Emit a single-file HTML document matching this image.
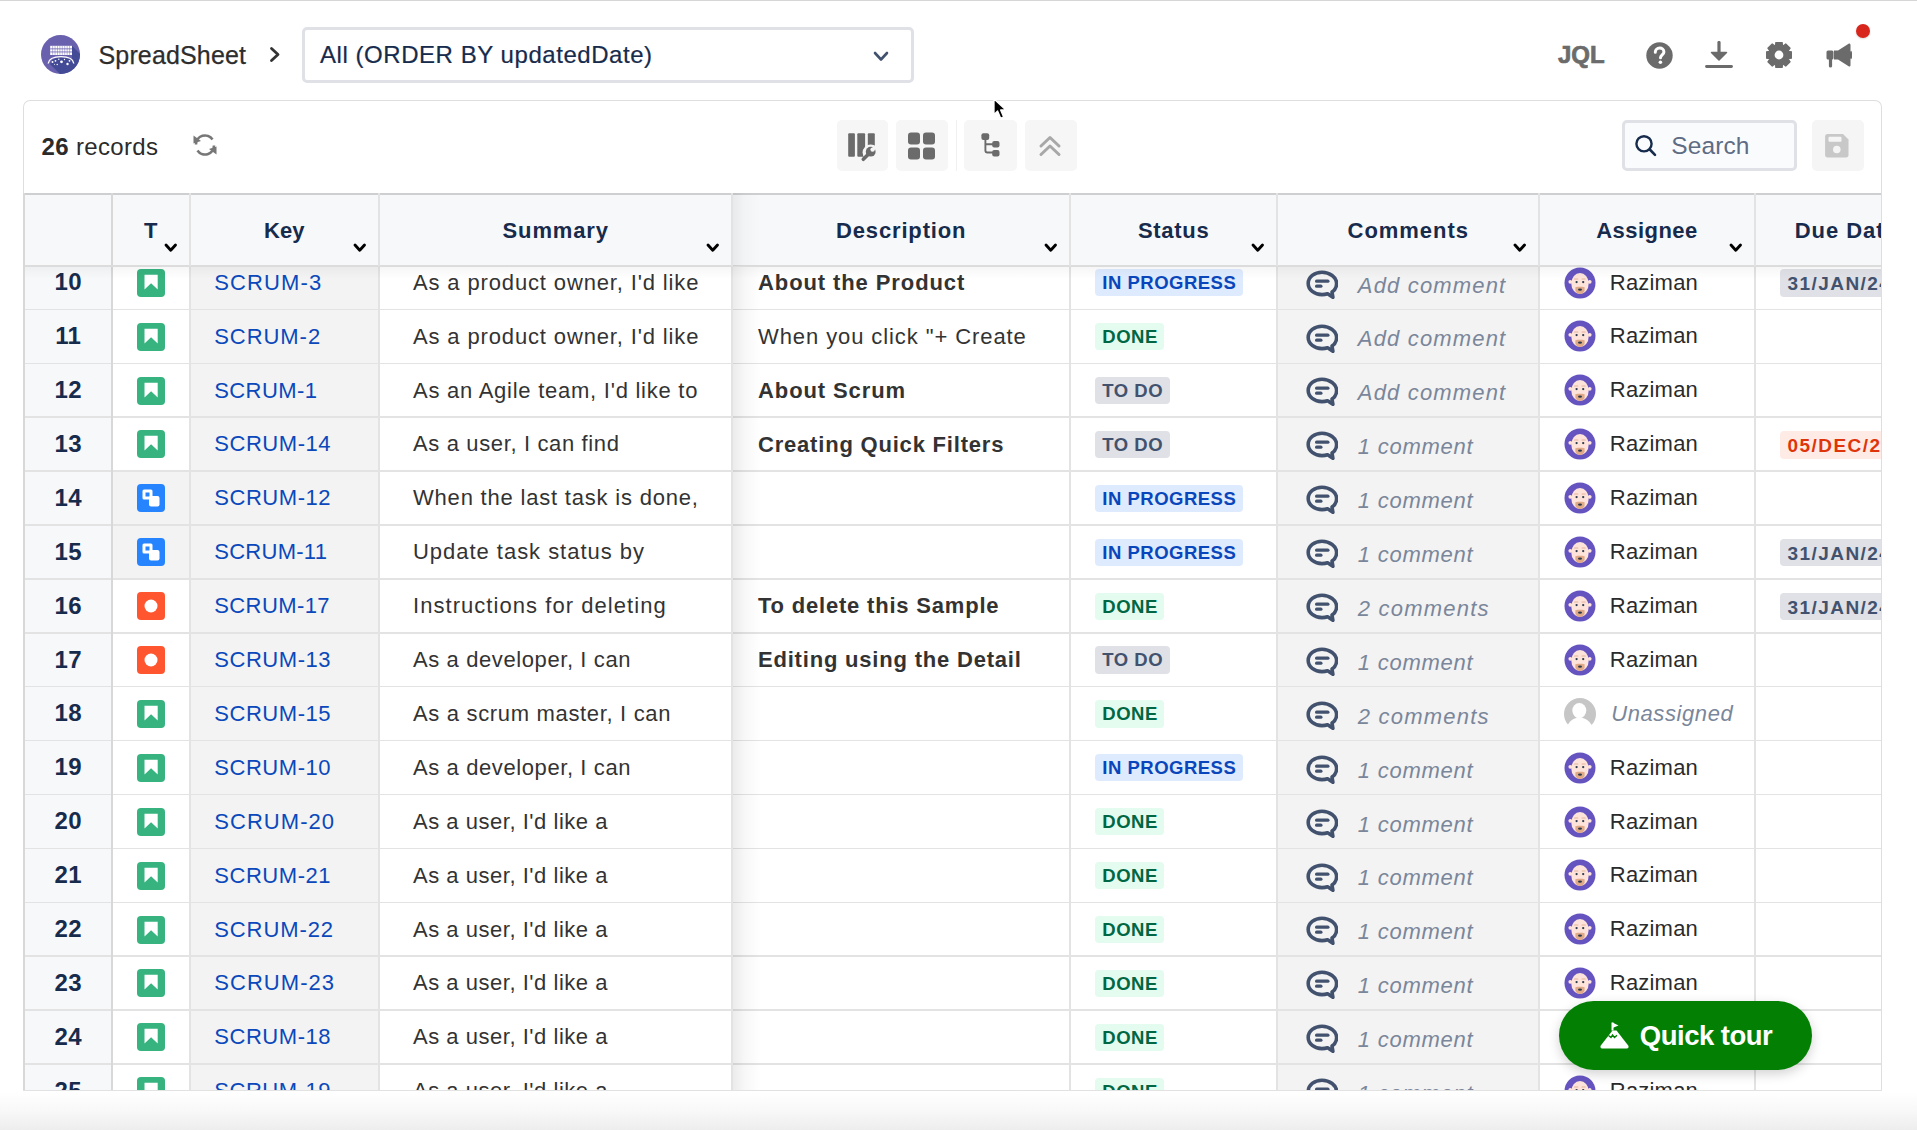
<!DOCTYPE html>
<html><head><meta charset="utf-8"><style>
*{box-sizing:border-box}
html,body{margin:0;padding:0;width:1917px;height:1130px;overflow:hidden;background:#fff;font-family:"Liberation Sans",sans-serif}
.t{position:absolute;white-space:nowrap}
.a{position:absolute}
</style></head><body>
<div class="a" style="left:0;top:0;width:1917px;height:1.3px;background:#d6d6d6"></div>
<svg class="a" style="left:41px;top:35px" width="39" height="39" viewBox="0 0 39 39">
<defs><clipPath id="lc"><circle cx="19.5" cy="19.5" r="19.5"/></clipPath></defs>
<circle cx="19.5" cy="19.5" r="19.5" fill="#6a61ae"/>
<g clip-path="url(#lc)"><path d="M31 10.8L60 40L40 60L9.2 29.2C9.8 24.8 14 22.3 20 22.3C25.5 22.3 29.5 23.6 31 25z" fill="#434b96"/></g>
<rect x="9.2" y="10.8" width="21.8" height="9.2" fill="#fff"/>
<path d="M9.2 13.85h21.8M9.2 16.95h21.8" stroke="#6a61ae" stroke-width="0.8"/><path d="M11.62 10.8v9M14.04 10.8v9M16.47 10.8v9M18.89 10.8v9M21.31 10.8v9M23.73 10.8v9M26.16 10.8v9M28.58 10.8v9" stroke="#6a61ae" stroke-width="0.45"/>
<path d="M7.2 28.5C7.8 24 13 21.6 20 21.6S32.2 24 32.8 28.5" fill="none" stroke="#fff" stroke-width="1.4"/>
<circle cx="11.5" cy="27" r="1" fill="#fff"/><circle cx="14.5" cy="25.8" r="0.9" fill="#fff"/><circle cx="17.8" cy="24.2" r="0.7" fill="#fff"/><circle cx="20.5" cy="26.8" r="1.4" fill="#fff"/><circle cx="23.5" cy="24.5" r="0.7" fill="#fff"/><circle cx="26.5" cy="29" r="1.2" fill="#fff"/><circle cx="16.2" cy="29.5" r="0.7" fill="#fff"/><circle cx="28.5" cy="25.8" r="0.9" fill="#fff"/><circle cx="13.5" cy="29.2" r="0.5" fill="#fff"/>
</svg>
<div class="t" style="left:98.5px;top:42.64px;font-size:25px;line-height:25px;color:#2d2d2d;font-weight:400;font-style:normal;letter-spacing:0.15px;-webkit-text-stroke:0.25px #2d2d2d;">SpreadSheet</div>
<svg class="a" style="left:268px;top:46px" width="14" height="17" viewBox="0 0 14 17"><path d="M3.5 2.5L10 8.5L3.5 14.5" fill="none" stroke="#333" stroke-width="2.8" stroke-linecap="round" stroke-linejoin="round"/></svg>
<div class="a" style="left:302px;top:27px;width:612px;height:56px;border:3px solid #dfe1e6;border-radius:5px;background:#fff"></div>
<div class="t" style="left:320px;top:43.28px;font-size:24px;line-height:24px;color:#172b4d;font-weight:400;font-style:normal;letter-spacing:0.55px;-webkit-text-stroke:0.2px #172b4d;">All (ORDER BY updatedDate)</div>
<svg style="position:absolute;left:872px;top:49.5px" width="18" height="12.5" viewBox="-2 -2 18 12.5"><path d="M1 1L7.0 7.5L13 1" fill="none" stroke="#42526e" stroke-width="2.6" stroke-linecap="round" stroke-linejoin="round"/></svg><div class="t" style="left:1558px;top:43.48px;font-size:24px;line-height:24px;color:#6b6b6b;font-weight:700;font-style:normal;letter-spacing:0px;-webkit-text-stroke:0.7px #6b6b6b;">JQL</div>
<svg class="a" style="left:1646px;top:42px" width="27" height="27" viewBox="0 0 27 27"><circle cx="13.5" cy="13.5" r="13.2" fill="#6b6b6b"/><path d="M9.3 10.3c0-2.5 1.9-4.2 4.3-4.2s4.3 1.6 4.3 3.8c0 2.9-3.4 3.1-3.4 5.9" fill="none" stroke="#fff" stroke-width="3" stroke-linecap="round"/><circle cx="14.4" cy="20.2" r="1.8" fill="#fff"/></svg>
<svg class="a" style="left:1705px;top:41px" width="28" height="28" viewBox="0 0 28 28"><path d="M14 1.5V15" stroke="#6b6b6b" stroke-width="3.2" stroke-linecap="round"/><path d="M6.5 11.5L14 19L21.5 11.5z" fill="#6b6b6b" stroke="#6b6b6b" stroke-width="1.5" stroke-linejoin="round"/><path d="M1.5 25.5h25" stroke="#6b6b6b" stroke-width="2.8" stroke-linecap="round"/></svg>
<svg class="a" style="left:1765.5px;top:41.5px" width="26" height="26" viewBox="0 0 26 26"><polygon points="25.63,9.91 25.63,16.09 21.88,16.65 21.86,16.70 24.11,19.74 19.74,24.11 16.70,21.86 16.65,21.88 16.09,25.63 9.91,25.63 9.35,21.88 9.30,21.86 6.26,24.11 1.89,19.74 4.14,16.70 4.12,16.65 0.37,16.09 0.37,9.91 4.12,9.35 4.14,9.30 1.89,6.26 6.26,1.89 9.30,4.14 9.35,4.12 9.91,0.37 16.09,0.37 16.65,4.12 16.70,4.14 19.74,1.89 24.11,6.26 21.86,9.30 21.88,9.35" fill="#6b6b6b" stroke="#6b6b6b" stroke-width="1.2" stroke-linejoin="round"/><circle cx="13" cy="13" r="4.4" fill="#fff"/></svg>
<svg class="a" style="left:1825px;top:42px" width="27" height="26" viewBox="0 0 27 26"><path d="M24 1.5c1 0 1.5.7 1.5 1.6v19.8c0 .9-.5 1.6-1.5 1.6L13 17.5H9V8.5h4z" fill="#6b6b6b"/><rect x="1.5" y="8.5" width="7" height="9" rx="1.5" fill="#6b6b6b"/><path d="M5.5 17.5v6.5" stroke="#6b6b6b" stroke-width="3.2" stroke-linecap="round"/><path d="M25.5 9.5c1 1 1 6 0 7" stroke="#6b6b6b" stroke-width="2"/></svg>
<div class="a" style="left:1855.7px;top:23.5px;width:14.6px;height:14.6px;border-radius:50%;background:#d8261c;box-shadow:0 1px 2px rgba(0,0,0,.15)"></div>
<div class="a" style="left:23px;top:100px;width:1859px;height:991px;border:1.5px solid #dedede;border-bottom:none;border-radius:7px 7px 0 0;background:#fff"></div>
<div class="t" style="left:41.5px;top:134.58px;font-size:24px;line-height:24px;color:#2b2b2b;font-weight:400;font-style:normal;letter-spacing:0.35px;"><b>26</b> records</div>
<svg class="a" style="left:192px;top:132px" width="26" height="26" viewBox="0 0 26 26"><path d="M4 12.5A9 9 0 0 1 20.5 7.5" fill="none" stroke="#777" stroke-width="2.6"/><path d="M22 13.5A9 9 0 0 1 5.5 18.5" fill="none" stroke="#777" stroke-width="2.6"/><path d="M1.5 3.5L1.5 11.5L9 9z" fill="#777"/><path d="M24.5 22.5L24.5 14.5L17 17z" fill="#777"/></svg>
<div class="a" style="left:837px;top:119.5px;width:51px;height:51.5px;border-radius:5px;background:#f6f6f6"></div>
<div class="a" style="left:896px;top:119.5px;width:52px;height:51.5px;border-radius:5px;background:#f6f6f6"></div>
<div class="a" style="left:964px;top:119.5px;width:53px;height:51.5px;border-radius:5px;background:#f6f6f6"></div>
<div class="a" style="left:1025px;top:119.5px;width:52px;height:51.5px;border-radius:5px;background:#f6f6f6"></div>
<div class="a" style="left:955.5px;top:119.5px;width:1.5px;height:51.5px;background:#f0f0f0"></div>
<svg class="a" style="left:842px;top:128px" width="40" height="36" viewBox="0 0 40 36"><rect x="6.2" y="5.3" width="6.7" height="23.5" rx="1" fill="#6b6b6b"/><rect x="15.3" y="5.3" width="7.8" height="23.5" rx="1" fill="#6b6b6b"/><rect x="25.8" y="5.3" width="7" height="23.5" rx="1" fill="#6b6b6b"/><circle cx="28.6" cy="24.6" r="8" fill="#f6f6f6"/><path d="M28.3 24.2L21.3 31.3" stroke="#6b6b6b" stroke-width="3.6" stroke-linecap="round"/><circle cx="28.7" cy="23.7" r="4.9" fill="#6b6b6b"/><circle cx="30.6" cy="21.6" r="2.2" fill="#f6f6f6"/><path d="M30.6 21.6L34 18.2" stroke="#f6f6f6" stroke-width="3"/></svg>
<svg class="a" style="left:907px;top:131.5px" width="29" height="28" viewBox="0 0 29 28"><rect x="1" y="0.5" width="12" height="12" rx="3" fill="#6b6b6b"/><rect x="16" y="0.5" width="12" height="12" rx="3" fill="#6b6b6b"/><rect x="1" y="15.5" width="12" height="12" rx="3" fill="#6b6b6b"/><rect x="16" y="15.5" width="12" height="12" rx="3" fill="#6b6b6b"/></svg>
<svg class="a" style="left:972px;top:128px" width="36" height="36" viewBox="0 0 36 36"><rect x="9.4" y="5.3" width="7.8" height="6.6" rx="2" fill="#6b6b6b"/><rect x="20.2" y="13" width="7.3" height="6.4" rx="2" fill="#6b6b6b"/><rect x="20.2" y="22" width="7.3" height="6.5" rx="2" fill="#6b6b6b"/><path d="M13.4 11v11.5q0 2 2 2H21M13.4 16.3H21" fill="none" stroke="#6b6b6b" stroke-width="1.9"/></svg>
<svg class="a" style="left:1038px;top:134px" width="24" height="23" viewBox="0 0 24 23"><path d="M3 12L12 3.5L21 12M3 20.5L12 12L21 20.5" fill="none" stroke="#a8a8a8" stroke-width="3" stroke-linecap="round" stroke-linejoin="round"/></svg>
<div class="a" style="left:1622px;top:119.5px;width:174.5px;height:51.5px;border:3px solid #dfe1e6;border-radius:5px;background:#fafbfc"></div>
<svg class="a" style="left:1634px;top:134px" width="24" height="23" viewBox="0 0 24 23"><circle cx="10" cy="9.8" r="7.6" fill="none" stroke="#172b4d" stroke-width="2.4"/><path d="M15.8 15.5L21 20.8" stroke="#172b4d" stroke-width="2.6" stroke-linecap="round"/></svg>
<div class="t" style="left:1671.3px;top:133.96px;font-size:24.5px;line-height:24.5px;color:#5e6c84;font-weight:400;font-style:normal;letter-spacing:0.1px;">Search</div>
<div class="a" style="left:1811.5px;top:119.5px;width:52.5px;height:51.5px;border-radius:5px;background:#f5f5f5"></div>
<svg class="a" style="left:1824px;top:133px" width="26" height="25" viewBox="0 0 26 25"><path d="M3.5 1h15.5l5.5 5.5v15.5c0 1.4-1 2.4-2.4 2.4H3.5c-1.4 0-2.4-1-2.4-2.4V3.4C1.1 2 2.1 1 3.5 1z" fill="#c8c8c8"/><rect x="4.5" y="3.8" width="13" height="5" rx="1" fill="#f5f5f5"/><circle cx="12.8" cy="16.5" r="3.8" fill="#f5f5f5"/></svg>
<div class="a" style="left:24.5px;top:193.2px;width:1856px;height:897.8px;overflow:hidden">
<div class="a" style="left:0;top:0;width:87.5px;height:897.8px;background:#f7f8fa"></div>
<div class="a" style="left:165.5px;top:0;width:189px;height:897.8px;background:#f3f3f3"></div>
<div class="a" style="left:1252.5px;top:0;width:262px;height:897.8px;background:#f3f3f3"></div>
<div class="a" style="left:87.5px;top:277.90px;width:78px;height:53.9px;background:#f3f3f3"></div>
<div class="a" style="left:87.5px;top:331.80px;width:78px;height:53.9px;background:#f3f3f3"></div>
<div class="a" style="left:0;top:115.45px;width:1856px;height:1.5px;background:#e3e3e3"></div>
<div class="a" style="left:0;top:169.35px;width:1856px;height:1.5px;background:#e3e3e3"></div>
<div class="a" style="left:0;top:223.25px;width:1856px;height:1.5px;background:#e3e3e3"></div>
<div class="a" style="left:0;top:277.15px;width:1856px;height:1.5px;background:#e3e3e3"></div>
<div class="a" style="left:0;top:331.05px;width:1856px;height:1.5px;background:#e3e3e3"></div>
<div class="a" style="left:0;top:384.95px;width:1856px;height:1.5px;background:#e3e3e3"></div>
<div class="a" style="left:0;top:438.85px;width:1856px;height:1.5px;background:#e3e3e3"></div>
<div class="a" style="left:0;top:492.75px;width:1856px;height:1.5px;background:#e3e3e3"></div>
<div class="a" style="left:0;top:546.65px;width:1856px;height:1.5px;background:#e3e3e3"></div>
<div class="a" style="left:0;top:600.55px;width:1856px;height:1.5px;background:#e3e3e3"></div>
<div class="a" style="left:0;top:654.45px;width:1856px;height:1.5px;background:#e3e3e3"></div>
<div class="a" style="left:0;top:708.35px;width:1856px;height:1.5px;background:#e3e3e3"></div>
<div class="a" style="left:0;top:762.25px;width:1856px;height:1.5px;background:#e3e3e3"></div>
<div class="a" style="left:0;top:816.15px;width:1856px;height:1.5px;background:#e3e3e3"></div>
<div class="a" style="left:0;top:870.05px;width:1856px;height:1.5px;background:#e3e3e3"></div>
<div class="a" style="left:0;top:923.95px;width:1856px;height:1.5px;background:#e3e3e3"></div>
<div class="a" style="left:86.50px;top:0;width:2px;height:897.8px;background:#d8d8d8"></div>
<div class="a" style="left:164.75px;top:0;width:1.5px;height:897.8px;background:#e3e3e3"></div>
<div class="a" style="left:353.75px;top:0;width:1.5px;height:897.8px;background:#e3e3e3"></div>
<div class="a" style="left:706.75px;top:0;width:1.5px;height:897.8px;background:#e3e3e3"></div>
<div class="a" style="left:1044.75px;top:0;width:1.5px;height:897.8px;background:#e3e3e3"></div>
<div class="a" style="left:1251.75px;top:0;width:1.5px;height:897.8px;background:#e3e3e3"></div>
<div class="a" style="left:1513.75px;top:0;width:1.5px;height:897.8px;background:#e3e3e3"></div>
<div class="a" style="left:1729.75px;top:0;width:1.5px;height:897.8px;background:#e3e3e3"></div>
<div class="a" style="left:708.5px;top:0;width:28px;height:897.8px;background:linear-gradient(90deg,rgba(0,0,0,.08),rgba(0,0,0,.03) 40%,rgba(0,0,0,0))"></div>
<div class="t" style="left:0;width:87.5px;text-align:center;top:77.08px;font-size:24px;line-height:24px;font-weight:700;color:#172b4d;padding-left:0px;letter-spacing:0.3px">10</div>
<div class="a" style="left:112.9px;top:75.60px;width:28px;height:28px"><svg width="28" height="28" viewBox="0 0 28 28"><rect x="0" y="0" width="28" height="28" rx="4" fill="#36b37e"/><path d="M7.5 5.8h13.2v14.8l-6.6-6.3-6.6 6.3z" fill="#fff"/></svg></div>
<div class="t" style="left:189.7px;top:78.58px;font-size:22px;line-height:22px;color:#0a48bb;font-weight:400;font-style:normal;letter-spacing:1.117px;">SCRUM-3</div>
<div class="t" style="left:388.5px;top:78.58px;font-size:22px;line-height:22px;color:#333;font-weight:400;font-style:normal;letter-spacing:0.8600000000000001px;">As a product owner, I&#39;d like</div>
<div class="t" style="left:733.5px;top:78.78px;font-size:22px;line-height:22px;color:#333;font-weight:700;font-style:normal;letter-spacing:0.9px;">About the Product</div>
<div class="a" style="left:1070.5px;top:76.00px;height:27.2px;padding:0 6.5px 0 7.3px;border-radius:4px;background:#deebff;font-size:18.5px;line-height:27.6px;font-weight:700;color:#0a46bb;letter-spacing:0.5px;white-space:nowrap">IN PROGRESS</div>
<div class="a" style="left:1281.0px;top:76.50px;width:32px;height:29px"><svg width="32" height="29" viewBox="0 0 32 29"><path d="M16 2.2C8.4 2.2 2.2 7.2 2.2 13.4S8.4 24.6 16 24.6c2 0 3.9-.3 5.6-.9l5.3 3.6-.9-5.3c2.9-2 4.6-5 4.6-8.6C30.6 7.2 23.6 2.2 16 2.2z" fill="none" stroke="#42526e" stroke-width="3.6" stroke-linejoin="round"/><rect x="9" y="9.6" width="14.5" height="3.2" rx="1.6" fill="#42526e"/><rect x="9" y="14.6" width="7.5" height="3.2" rx="1.6" fill="#42526e"/></svg></div>
<div class="t" style="left:1333.3px;top:81.38px;font-size:22px;line-height:22px;color:#7a869a;font-weight:400;font-style:italic;letter-spacing:1.17px;">Add comment</div>
<div class="a" style="left:1539.5px;top:73.40px;width:32px;height:32px"><svg width="32" height="32" viewBox="0 0 32 32"><circle cx="16" cy="16" r="15.5" fill="#6554c0"/><circle cx="6.3" cy="14.8" r="1.9" fill="#fde3da"/><circle cx="25.7" cy="14.8" r="1.9" fill="#fde3da"/><ellipse cx="16" cy="16.5" rx="8.7" ry="10.6" fill="#fde3da"/><path d="M11.4 20.3c1.5-.5 3-.6 4.6-.6s3.1.1 4.6.6v3.5c-.8 2.2-2.5 3.3-4.6 3.3s-3.8-1.1-4.6-3.3z" fill="#e0a988"/><ellipse cx="16" cy="22.6" rx="2" ry="1.2" fill="#2b3a4a"/><circle cx="12.6" cy="15.1" r="1.15" fill="#2b3a4a"/><circle cx="19.2" cy="15.1" r="1.15" fill="#2b3a4a"/><path d="M10.6 12h3.2M18 12h3.2" stroke="#e3b39a" stroke-width="1.1" stroke-linecap="round"/></svg></div>
<div class="t" style="left:1585.3px;top:78.38px;font-size:22px;line-height:22px;color:#2b2b2b;font-weight:400;font-style:normal;letter-spacing:0.2px;">Raziman</div>
<div class="a" style="left:1755.5px;top:76.00px;height:27.7px;padding:1px 7.5px 0 7.5px;border-radius:4px;background:#dfe1e6;font-size:19px;line-height:27.7px;font-weight:700;color:#42526e;letter-spacing:1.45px;white-space:nowrap">31/JAN/24</div>
<div class="t" style="left:0;width:87.5px;text-align:center;top:130.98px;font-size:24px;line-height:24px;font-weight:700;color:#172b4d;padding-left:0px;letter-spacing:0.3px">11</div>
<div class="a" style="left:112.9px;top:129.50px;width:28px;height:28px"><svg width="28" height="28" viewBox="0 0 28 28"><rect x="0" y="0" width="28" height="28" rx="4" fill="#36b37e"/><path d="M7.5 5.8h13.2v14.8l-6.6-6.3-6.6 6.3z" fill="#fff"/></svg></div>
<div class="t" style="left:189.7px;top:132.48px;font-size:22px;line-height:22px;color:#0a48bb;font-weight:400;font-style:normal;letter-spacing:0.95px;">SCRUM-2</div>
<div class="t" style="left:388.5px;top:132.48px;font-size:22px;line-height:22px;color:#333;font-weight:400;font-style:normal;letter-spacing:0.8600000000000001px;">As a product owner, I&#39;d like</div>
<div class="t" style="left:733.5px;top:132.68px;font-size:22px;line-height:22px;color:#333;font-weight:400;font-style:normal;letter-spacing:0.91px;">When you click &quot;+ Create</div>
<div class="a" style="left:1070.5px;top:129.90px;height:27.2px;padding:0 6.5px 0 7.3px;border-radius:4px;background:#e3fcef;font-size:18.5px;line-height:27.6px;font-weight:700;color:#006644;letter-spacing:0.5px;white-space:nowrap">DONE</div>
<div class="a" style="left:1281.0px;top:130.40px;width:32px;height:29px"><svg width="32" height="29" viewBox="0 0 32 29"><path d="M16 2.2C8.4 2.2 2.2 7.2 2.2 13.4S8.4 24.6 16 24.6c2 0 3.9-.3 5.6-.9l5.3 3.6-.9-5.3c2.9-2 4.6-5 4.6-8.6C30.6 7.2 23.6 2.2 16 2.2z" fill="none" stroke="#42526e" stroke-width="3.6" stroke-linejoin="round"/><rect x="9" y="9.6" width="14.5" height="3.2" rx="1.6" fill="#42526e"/><rect x="9" y="14.6" width="7.5" height="3.2" rx="1.6" fill="#42526e"/></svg></div>
<div class="t" style="left:1333.3px;top:135.28px;font-size:22px;line-height:22px;color:#7a869a;font-weight:400;font-style:italic;letter-spacing:1.17px;">Add comment</div>
<div class="a" style="left:1539.5px;top:127.30px;width:32px;height:32px"><svg width="32" height="32" viewBox="0 0 32 32"><circle cx="16" cy="16" r="15.5" fill="#6554c0"/><circle cx="6.3" cy="14.8" r="1.9" fill="#fde3da"/><circle cx="25.7" cy="14.8" r="1.9" fill="#fde3da"/><ellipse cx="16" cy="16.5" rx="8.7" ry="10.6" fill="#fde3da"/><path d="M11.4 20.3c1.5-.5 3-.6 4.6-.6s3.1.1 4.6.6v3.5c-.8 2.2-2.5 3.3-4.6 3.3s-3.8-1.1-4.6-3.3z" fill="#e0a988"/><ellipse cx="16" cy="22.6" rx="2" ry="1.2" fill="#2b3a4a"/><circle cx="12.6" cy="15.1" r="1.15" fill="#2b3a4a"/><circle cx="19.2" cy="15.1" r="1.15" fill="#2b3a4a"/><path d="M10.6 12h3.2M18 12h3.2" stroke="#e3b39a" stroke-width="1.1" stroke-linecap="round"/></svg></div>
<div class="t" style="left:1585.3px;top:132.28px;font-size:22px;line-height:22px;color:#2b2b2b;font-weight:400;font-style:normal;letter-spacing:0.2px;">Raziman</div>
<div class="t" style="left:0;width:87.5px;text-align:center;top:184.88px;font-size:24px;line-height:24px;font-weight:700;color:#172b4d;padding-left:0px;letter-spacing:0.3px">12</div>
<div class="a" style="left:112.9px;top:183.40px;width:28px;height:28px"><svg width="28" height="28" viewBox="0 0 28 28"><rect x="0" y="0" width="28" height="28" rx="4" fill="#36b37e"/><path d="M7.5 5.8h13.2v14.8l-6.6-6.3-6.6 6.3z" fill="#fff"/></svg></div>
<div class="t" style="left:189.7px;top:186.38px;font-size:22px;line-height:22px;color:#0a48bb;font-weight:400;font-style:normal;letter-spacing:0.417px;">SCRUM-1</div>
<div class="t" style="left:388.5px;top:186.38px;font-size:22px;line-height:22px;color:#333;font-weight:400;font-style:normal;letter-spacing:0.75px;">As an Agile team, I&#39;d like to</div>
<div class="t" style="left:733.5px;top:186.58px;font-size:22px;line-height:22px;color:#333;font-weight:700;font-style:normal;letter-spacing:0.9px;">About Scrum</div>
<div class="a" style="left:1070.5px;top:183.80px;height:27.2px;padding:0 6.5px 0 7.3px;border-radius:4px;background:#dfe1e6;font-size:18.5px;line-height:27.6px;font-weight:700;color:#42526e;letter-spacing:0.5px;white-space:nowrap">TO DO</div>
<div class="a" style="left:1281.0px;top:184.30px;width:32px;height:29px"><svg width="32" height="29" viewBox="0 0 32 29"><path d="M16 2.2C8.4 2.2 2.2 7.2 2.2 13.4S8.4 24.6 16 24.6c2 0 3.9-.3 5.6-.9l5.3 3.6-.9-5.3c2.9-2 4.6-5 4.6-8.6C30.6 7.2 23.6 2.2 16 2.2z" fill="none" stroke="#42526e" stroke-width="3.6" stroke-linejoin="round"/><rect x="9" y="9.6" width="14.5" height="3.2" rx="1.6" fill="#42526e"/><rect x="9" y="14.6" width="7.5" height="3.2" rx="1.6" fill="#42526e"/></svg></div>
<div class="t" style="left:1333.3px;top:189.18px;font-size:22px;line-height:22px;color:#7a869a;font-weight:400;font-style:italic;letter-spacing:1.17px;">Add comment</div>
<div class="a" style="left:1539.5px;top:181.20px;width:32px;height:32px"><svg width="32" height="32" viewBox="0 0 32 32"><circle cx="16" cy="16" r="15.5" fill="#6554c0"/><circle cx="6.3" cy="14.8" r="1.9" fill="#fde3da"/><circle cx="25.7" cy="14.8" r="1.9" fill="#fde3da"/><ellipse cx="16" cy="16.5" rx="8.7" ry="10.6" fill="#fde3da"/><path d="M11.4 20.3c1.5-.5 3-.6 4.6-.6s3.1.1 4.6.6v3.5c-.8 2.2-2.5 3.3-4.6 3.3s-3.8-1.1-4.6-3.3z" fill="#e0a988"/><ellipse cx="16" cy="22.6" rx="2" ry="1.2" fill="#2b3a4a"/><circle cx="12.6" cy="15.1" r="1.15" fill="#2b3a4a"/><circle cx="19.2" cy="15.1" r="1.15" fill="#2b3a4a"/><path d="M10.6 12h3.2M18 12h3.2" stroke="#e3b39a" stroke-width="1.1" stroke-linecap="round"/></svg></div>
<div class="t" style="left:1585.3px;top:186.18px;font-size:22px;line-height:22px;color:#2b2b2b;font-weight:400;font-style:normal;letter-spacing:0.2px;">Raziman</div>
<div class="t" style="left:0;width:87.5px;text-align:center;top:238.78px;font-size:24px;line-height:24px;font-weight:700;color:#172b4d;padding-left:0px;letter-spacing:0.3px">13</div>
<div class="a" style="left:112.9px;top:237.30px;width:28px;height:28px"><svg width="28" height="28" viewBox="0 0 28 28"><rect x="0" y="0" width="28" height="28" rx="4" fill="#36b37e"/><path d="M7.5 5.8h13.2v14.8l-6.6-6.3-6.6 6.3z" fill="#fff"/></svg></div>
<div class="t" style="left:189.7px;top:240.28px;font-size:22px;line-height:22px;color:#0a48bb;font-weight:400;font-style:normal;letter-spacing:0.564px;">SCRUM-14</div>
<div class="t" style="left:388.5px;top:240.28px;font-size:22px;line-height:22px;color:#333;font-weight:400;font-style:normal;letter-spacing:0.635px;">As a user, I can find</div>
<div class="t" style="left:733.5px;top:240.48px;font-size:22px;line-height:22px;color:#333;font-weight:700;font-style:normal;letter-spacing:0.8px;">Creating Quick Filters</div>
<div class="a" style="left:1070.5px;top:237.70px;height:27.2px;padding:0 6.5px 0 7.3px;border-radius:4px;background:#dfe1e6;font-size:18.5px;line-height:27.6px;font-weight:700;color:#42526e;letter-spacing:0.5px;white-space:nowrap">TO DO</div>
<div class="a" style="left:1281.0px;top:238.20px;width:32px;height:29px"><svg width="32" height="29" viewBox="0 0 32 29"><path d="M16 2.2C8.4 2.2 2.2 7.2 2.2 13.4S8.4 24.6 16 24.6c2 0 3.9-.3 5.6-.9l5.3 3.6-.9-5.3c2.9-2 4.6-5 4.6-8.6C30.6 7.2 23.6 2.2 16 2.2z" fill="none" stroke="#42526e" stroke-width="3.6" stroke-linejoin="round"/><rect x="9" y="9.6" width="14.5" height="3.2" rx="1.6" fill="#42526e"/><rect x="9" y="14.6" width="7.5" height="3.2" rx="1.6" fill="#42526e"/></svg></div>
<div class="t" style="left:1333.3px;top:243.08px;font-size:22px;line-height:22px;color:#7a869a;font-weight:400;font-style:italic;letter-spacing:0.76px;">1 comment</div>
<div class="a" style="left:1539.5px;top:235.10px;width:32px;height:32px"><svg width="32" height="32" viewBox="0 0 32 32"><circle cx="16" cy="16" r="15.5" fill="#6554c0"/><circle cx="6.3" cy="14.8" r="1.9" fill="#fde3da"/><circle cx="25.7" cy="14.8" r="1.9" fill="#fde3da"/><ellipse cx="16" cy="16.5" rx="8.7" ry="10.6" fill="#fde3da"/><path d="M11.4 20.3c1.5-.5 3-.6 4.6-.6s3.1.1 4.6.6v3.5c-.8 2.2-2.5 3.3-4.6 3.3s-3.8-1.1-4.6-3.3z" fill="#e0a988"/><ellipse cx="16" cy="22.6" rx="2" ry="1.2" fill="#2b3a4a"/><circle cx="12.6" cy="15.1" r="1.15" fill="#2b3a4a"/><circle cx="19.2" cy="15.1" r="1.15" fill="#2b3a4a"/><path d="M10.6 12h3.2M18 12h3.2" stroke="#e3b39a" stroke-width="1.1" stroke-linecap="round"/></svg></div>
<div class="t" style="left:1585.3px;top:240.08px;font-size:22px;line-height:22px;color:#2b2b2b;font-weight:400;font-style:normal;letter-spacing:0.2px;">Raziman</div>
<div class="a" style="left:1755.5px;top:237.70px;height:27.7px;padding:1px 7.5px 0 7.5px;border-radius:4px;background:#ffebe6;font-size:19px;line-height:27.7px;font-weight:700;color:#de350b;letter-spacing:1.45px;white-space:nowrap">05/DEC/23</div>
<div class="t" style="left:0;width:87.5px;text-align:center;top:292.68px;font-size:24px;line-height:24px;font-weight:700;color:#172b4d;padding-left:0px;letter-spacing:0.3px">14</div>
<div class="a" style="left:112.9px;top:291.20px;width:28px;height:28px"><svg width="28" height="28" viewBox="0 0 28 28"><rect x="0" y="0" width="28" height="28" rx="4" fill="#2684ff"/><rect x="5.5" y="5.5" width="10" height="10" rx="1.5" fill="#fff"/><rect x="8.5" y="8.5" width="4" height="4" fill="#2684ff"/><rect x="12" y="12" width="10.5" height="10.5" rx="2" fill="#fff"/></svg></div>
<div class="t" style="left:189.7px;top:294.18px;font-size:22px;line-height:22px;color:#0a48bb;font-weight:400;font-style:normal;letter-spacing:0.564px;">SCRUM-12</div>
<div class="t" style="left:388.5px;top:294.18px;font-size:22px;line-height:22px;color:#333;font-weight:400;font-style:normal;letter-spacing:0.8px;">When the last task is done,</div>
<div class="a" style="left:1070.5px;top:291.60px;height:27.2px;padding:0 6.5px 0 7.3px;border-radius:4px;background:#deebff;font-size:18.5px;line-height:27.6px;font-weight:700;color:#0a46bb;letter-spacing:0.5px;white-space:nowrap">IN PROGRESS</div>
<div class="a" style="left:1281.0px;top:292.10px;width:32px;height:29px"><svg width="32" height="29" viewBox="0 0 32 29"><path d="M16 2.2C8.4 2.2 2.2 7.2 2.2 13.4S8.4 24.6 16 24.6c2 0 3.9-.3 5.6-.9l5.3 3.6-.9-5.3c2.9-2 4.6-5 4.6-8.6C30.6 7.2 23.6 2.2 16 2.2z" fill="none" stroke="#42526e" stroke-width="3.6" stroke-linejoin="round"/><rect x="9" y="9.6" width="14.5" height="3.2" rx="1.6" fill="#42526e"/><rect x="9" y="14.6" width="7.5" height="3.2" rx="1.6" fill="#42526e"/></svg></div>
<div class="t" style="left:1333.3px;top:296.98px;font-size:22px;line-height:22px;color:#7a869a;font-weight:400;font-style:italic;letter-spacing:0.76px;">1 comment</div>
<div class="a" style="left:1539.5px;top:289.00px;width:32px;height:32px"><svg width="32" height="32" viewBox="0 0 32 32"><circle cx="16" cy="16" r="15.5" fill="#6554c0"/><circle cx="6.3" cy="14.8" r="1.9" fill="#fde3da"/><circle cx="25.7" cy="14.8" r="1.9" fill="#fde3da"/><ellipse cx="16" cy="16.5" rx="8.7" ry="10.6" fill="#fde3da"/><path d="M11.4 20.3c1.5-.5 3-.6 4.6-.6s3.1.1 4.6.6v3.5c-.8 2.2-2.5 3.3-4.6 3.3s-3.8-1.1-4.6-3.3z" fill="#e0a988"/><ellipse cx="16" cy="22.6" rx="2" ry="1.2" fill="#2b3a4a"/><circle cx="12.6" cy="15.1" r="1.15" fill="#2b3a4a"/><circle cx="19.2" cy="15.1" r="1.15" fill="#2b3a4a"/><path d="M10.6 12h3.2M18 12h3.2" stroke="#e3b39a" stroke-width="1.1" stroke-linecap="round"/></svg></div>
<div class="t" style="left:1585.3px;top:293.98px;font-size:22px;line-height:22px;color:#2b2b2b;font-weight:400;font-style:normal;letter-spacing:0.2px;">Raziman</div>
<div class="t" style="left:0;width:87.5px;text-align:center;top:346.58px;font-size:24px;line-height:24px;font-weight:700;color:#172b4d;padding-left:0px;letter-spacing:0.3px">15</div>
<div class="a" style="left:112.9px;top:345.10px;width:28px;height:28px"><svg width="28" height="28" viewBox="0 0 28 28"><rect x="0" y="0" width="28" height="28" rx="4" fill="#2684ff"/><rect x="5.5" y="5.5" width="10" height="10" rx="1.5" fill="#fff"/><rect x="8.5" y="8.5" width="4" height="4" fill="#2684ff"/><rect x="12" y="12" width="10.5" height="10.5" rx="2" fill="#fff"/></svg></div>
<div class="t" style="left:189.7px;top:348.08px;font-size:22px;line-height:22px;color:#0a48bb;font-weight:400;font-style:normal;letter-spacing:0.279px;">SCRUM-11</div>
<div class="t" style="left:388.5px;top:348.08px;font-size:22px;line-height:22px;color:#333;font-weight:400;font-style:normal;letter-spacing:0.9700000000000001px;">Update task status by</div>
<div class="a" style="left:1070.5px;top:345.50px;height:27.2px;padding:0 6.5px 0 7.3px;border-radius:4px;background:#deebff;font-size:18.5px;line-height:27.6px;font-weight:700;color:#0a46bb;letter-spacing:0.5px;white-space:nowrap">IN PROGRESS</div>
<div class="a" style="left:1281.0px;top:346.00px;width:32px;height:29px"><svg width="32" height="29" viewBox="0 0 32 29"><path d="M16 2.2C8.4 2.2 2.2 7.2 2.2 13.4S8.4 24.6 16 24.6c2 0 3.9-.3 5.6-.9l5.3 3.6-.9-5.3c2.9-2 4.6-5 4.6-8.6C30.6 7.2 23.6 2.2 16 2.2z" fill="none" stroke="#42526e" stroke-width="3.6" stroke-linejoin="round"/><rect x="9" y="9.6" width="14.5" height="3.2" rx="1.6" fill="#42526e"/><rect x="9" y="14.6" width="7.5" height="3.2" rx="1.6" fill="#42526e"/></svg></div>
<div class="t" style="left:1333.3px;top:350.88px;font-size:22px;line-height:22px;color:#7a869a;font-weight:400;font-style:italic;letter-spacing:0.76px;">1 comment</div>
<div class="a" style="left:1539.5px;top:342.90px;width:32px;height:32px"><svg width="32" height="32" viewBox="0 0 32 32"><circle cx="16" cy="16" r="15.5" fill="#6554c0"/><circle cx="6.3" cy="14.8" r="1.9" fill="#fde3da"/><circle cx="25.7" cy="14.8" r="1.9" fill="#fde3da"/><ellipse cx="16" cy="16.5" rx="8.7" ry="10.6" fill="#fde3da"/><path d="M11.4 20.3c1.5-.5 3-.6 4.6-.6s3.1.1 4.6.6v3.5c-.8 2.2-2.5 3.3-4.6 3.3s-3.8-1.1-4.6-3.3z" fill="#e0a988"/><ellipse cx="16" cy="22.6" rx="2" ry="1.2" fill="#2b3a4a"/><circle cx="12.6" cy="15.1" r="1.15" fill="#2b3a4a"/><circle cx="19.2" cy="15.1" r="1.15" fill="#2b3a4a"/><path d="M10.6 12h3.2M18 12h3.2" stroke="#e3b39a" stroke-width="1.1" stroke-linecap="round"/></svg></div>
<div class="t" style="left:1585.3px;top:347.88px;font-size:22px;line-height:22px;color:#2b2b2b;font-weight:400;font-style:normal;letter-spacing:0.2px;">Raziman</div>
<div class="a" style="left:1755.5px;top:345.50px;height:27.7px;padding:1px 7.5px 0 7.5px;border-radius:4px;background:#dfe1e6;font-size:19px;line-height:27.7px;font-weight:700;color:#42526e;letter-spacing:1.45px;white-space:nowrap">31/JAN/24</div>
<div class="t" style="left:0;width:87.5px;text-align:center;top:400.48px;font-size:24px;line-height:24px;font-weight:700;color:#172b4d;padding-left:0px;letter-spacing:0.3px">16</div>
<div class="a" style="left:112.9px;top:399.00px;width:28px;height:28px"><svg width="28" height="28" viewBox="0 0 28 28"><rect x="0" y="0" width="28" height="28" rx="4" fill="#ff5630"/><circle cx="14" cy="14" r="6.5" fill="#fff"/></svg></div>
<div class="t" style="left:189.7px;top:401.98px;font-size:22px;line-height:22px;color:#0a48bb;font-weight:400;font-style:normal;letter-spacing:0.421px;">SCRUM-17</div>
<div class="t" style="left:388.5px;top:401.98px;font-size:22px;line-height:22px;color:#333;font-weight:400;font-style:normal;letter-spacing:1.05px;">Instructions for deleting</div>
<div class="t" style="left:733.5px;top:402.18px;font-size:22px;line-height:22px;color:#333;font-weight:700;font-style:normal;letter-spacing:0.8px;">To delete this Sample</div>
<div class="a" style="left:1070.5px;top:399.40px;height:27.2px;padding:0 6.5px 0 7.3px;border-radius:4px;background:#e3fcef;font-size:18.5px;line-height:27.6px;font-weight:700;color:#006644;letter-spacing:0.5px;white-space:nowrap">DONE</div>
<div class="a" style="left:1281.0px;top:399.90px;width:32px;height:29px"><svg width="32" height="29" viewBox="0 0 32 29"><path d="M16 2.2C8.4 2.2 2.2 7.2 2.2 13.4S8.4 24.6 16 24.6c2 0 3.9-.3 5.6-.9l5.3 3.6-.9-5.3c2.9-2 4.6-5 4.6-8.6C30.6 7.2 23.6 2.2 16 2.2z" fill="none" stroke="#42526e" stroke-width="3.6" stroke-linejoin="round"/><rect x="9" y="9.6" width="14.5" height="3.2" rx="1.6" fill="#42526e"/><rect x="9" y="14.6" width="7.5" height="3.2" rx="1.6" fill="#42526e"/></svg></div>
<div class="t" style="left:1333.3px;top:404.78px;font-size:22px;line-height:22px;color:#7a869a;font-weight:400;font-style:italic;letter-spacing:1.22px;">2 comments</div>
<div class="a" style="left:1539.5px;top:396.80px;width:32px;height:32px"><svg width="32" height="32" viewBox="0 0 32 32"><circle cx="16" cy="16" r="15.5" fill="#6554c0"/><circle cx="6.3" cy="14.8" r="1.9" fill="#fde3da"/><circle cx="25.7" cy="14.8" r="1.9" fill="#fde3da"/><ellipse cx="16" cy="16.5" rx="8.7" ry="10.6" fill="#fde3da"/><path d="M11.4 20.3c1.5-.5 3-.6 4.6-.6s3.1.1 4.6.6v3.5c-.8 2.2-2.5 3.3-4.6 3.3s-3.8-1.1-4.6-3.3z" fill="#e0a988"/><ellipse cx="16" cy="22.6" rx="2" ry="1.2" fill="#2b3a4a"/><circle cx="12.6" cy="15.1" r="1.15" fill="#2b3a4a"/><circle cx="19.2" cy="15.1" r="1.15" fill="#2b3a4a"/><path d="M10.6 12h3.2M18 12h3.2" stroke="#e3b39a" stroke-width="1.1" stroke-linecap="round"/></svg></div>
<div class="t" style="left:1585.3px;top:401.78px;font-size:22px;line-height:22px;color:#2b2b2b;font-weight:400;font-style:normal;letter-spacing:0.2px;">Raziman</div>
<div class="a" style="left:1755.5px;top:399.40px;height:27.7px;padding:1px 7.5px 0 7.5px;border-radius:4px;background:#dfe1e6;font-size:19px;line-height:27.7px;font-weight:700;color:#42526e;letter-spacing:1.45px;white-space:nowrap">31/JAN/24</div>
<div class="t" style="left:0;width:87.5px;text-align:center;top:454.38px;font-size:24px;line-height:24px;font-weight:700;color:#172b4d;padding-left:0px;letter-spacing:0.3px">17</div>
<div class="a" style="left:112.9px;top:452.90px;width:28px;height:28px"><svg width="28" height="28" viewBox="0 0 28 28"><rect x="0" y="0" width="28" height="28" rx="4" fill="#ff5630"/><circle cx="14" cy="14" r="6.5" fill="#fff"/></svg></div>
<div class="t" style="left:189.7px;top:455.88px;font-size:22px;line-height:22px;color:#0a48bb;font-weight:400;font-style:normal;letter-spacing:0.564px;">SCRUM-13</div>
<div class="t" style="left:388.5px;top:455.88px;font-size:22px;line-height:22px;color:#333;font-weight:400;font-style:normal;letter-spacing:0.6000000000000001px;">As a developer, I can</div>
<div class="t" style="left:733.5px;top:456.08px;font-size:22px;line-height:22px;color:#333;font-weight:700;font-style:normal;letter-spacing:0.8px;">Editing using the Detail</div>
<div class="a" style="left:1070.5px;top:453.30px;height:27.2px;padding:0 6.5px 0 7.3px;border-radius:4px;background:#dfe1e6;font-size:18.5px;line-height:27.6px;font-weight:700;color:#42526e;letter-spacing:0.5px;white-space:nowrap">TO DO</div>
<div class="a" style="left:1281.0px;top:453.80px;width:32px;height:29px"><svg width="32" height="29" viewBox="0 0 32 29"><path d="M16 2.2C8.4 2.2 2.2 7.2 2.2 13.4S8.4 24.6 16 24.6c2 0 3.9-.3 5.6-.9l5.3 3.6-.9-5.3c2.9-2 4.6-5 4.6-8.6C30.6 7.2 23.6 2.2 16 2.2z" fill="none" stroke="#42526e" stroke-width="3.6" stroke-linejoin="round"/><rect x="9" y="9.6" width="14.5" height="3.2" rx="1.6" fill="#42526e"/><rect x="9" y="14.6" width="7.5" height="3.2" rx="1.6" fill="#42526e"/></svg></div>
<div class="t" style="left:1333.3px;top:458.68px;font-size:22px;line-height:22px;color:#7a869a;font-weight:400;font-style:italic;letter-spacing:0.76px;">1 comment</div>
<div class="a" style="left:1539.5px;top:450.70px;width:32px;height:32px"><svg width="32" height="32" viewBox="0 0 32 32"><circle cx="16" cy="16" r="15.5" fill="#6554c0"/><circle cx="6.3" cy="14.8" r="1.9" fill="#fde3da"/><circle cx="25.7" cy="14.8" r="1.9" fill="#fde3da"/><ellipse cx="16" cy="16.5" rx="8.7" ry="10.6" fill="#fde3da"/><path d="M11.4 20.3c1.5-.5 3-.6 4.6-.6s3.1.1 4.6.6v3.5c-.8 2.2-2.5 3.3-4.6 3.3s-3.8-1.1-4.6-3.3z" fill="#e0a988"/><ellipse cx="16" cy="22.6" rx="2" ry="1.2" fill="#2b3a4a"/><circle cx="12.6" cy="15.1" r="1.15" fill="#2b3a4a"/><circle cx="19.2" cy="15.1" r="1.15" fill="#2b3a4a"/><path d="M10.6 12h3.2M18 12h3.2" stroke="#e3b39a" stroke-width="1.1" stroke-linecap="round"/></svg></div>
<div class="t" style="left:1585.3px;top:455.68px;font-size:22px;line-height:22px;color:#2b2b2b;font-weight:400;font-style:normal;letter-spacing:0.2px;">Raziman</div>
<div class="t" style="left:0;width:87.5px;text-align:center;top:508.28px;font-size:24px;line-height:24px;font-weight:700;color:#172b4d;padding-left:0px;letter-spacing:0.3px">18</div>
<div class="a" style="left:112.9px;top:506.80px;width:28px;height:28px"><svg width="28" height="28" viewBox="0 0 28 28"><rect x="0" y="0" width="28" height="28" rx="4" fill="#36b37e"/><path d="M7.5 5.8h13.2v14.8l-6.6-6.3-6.6 6.3z" fill="#fff"/></svg></div>
<div class="t" style="left:189.7px;top:509.78px;font-size:22px;line-height:22px;color:#0a48bb;font-weight:400;font-style:normal;letter-spacing:0.564px;">SCRUM-15</div>
<div class="t" style="left:388.5px;top:509.78px;font-size:22px;line-height:22px;color:#333;font-weight:400;font-style:normal;letter-spacing:0.67px;">As a scrum master, I can</div>
<div class="a" style="left:1070.5px;top:507.20px;height:27.2px;padding:0 6.5px 0 7.3px;border-radius:4px;background:#e3fcef;font-size:18.5px;line-height:27.6px;font-weight:700;color:#006644;letter-spacing:0.5px;white-space:nowrap">DONE</div>
<div class="a" style="left:1281.0px;top:507.70px;width:32px;height:29px"><svg width="32" height="29" viewBox="0 0 32 29"><path d="M16 2.2C8.4 2.2 2.2 7.2 2.2 13.4S8.4 24.6 16 24.6c2 0 3.9-.3 5.6-.9l5.3 3.6-.9-5.3c2.9-2 4.6-5 4.6-8.6C30.6 7.2 23.6 2.2 16 2.2z" fill="none" stroke="#42526e" stroke-width="3.6" stroke-linejoin="round"/><rect x="9" y="9.6" width="14.5" height="3.2" rx="1.6" fill="#42526e"/><rect x="9" y="14.6" width="7.5" height="3.2" rx="1.6" fill="#42526e"/></svg></div>
<div class="t" style="left:1333.3px;top:512.58px;font-size:22px;line-height:22px;color:#7a869a;font-weight:400;font-style:italic;letter-spacing:1.22px;">2 comments</div>
<div class="a" style="left:1539.5px;top:504.60px;width:32px;height:32px"><svg width="32" height="32" viewBox="0 0 32 32"><circle cx="16" cy="16" r="16" fill="#c6c6c6"/><ellipse cx="15.3" cy="12.6" rx="7" ry="7.6" fill="#fff"/><path d="M3 28.5C5.5 23 9.5 19.5 15.5 19.5S25.5 23 28.5 28.5V33H3z" fill="#fff"/></svg></div>
<div class="t" style="left:1586.7px;top:509.58px;font-size:22px;line-height:22px;color:#7a869a;font-weight:400;font-style:italic;letter-spacing:0.6px;">Unassigned</div>
<div class="t" style="left:0;width:87.5px;text-align:center;top:562.18px;font-size:24px;line-height:24px;font-weight:700;color:#172b4d;padding-left:0px;letter-spacing:0.3px">19</div>
<div class="a" style="left:112.9px;top:560.70px;width:28px;height:28px"><svg width="28" height="28" viewBox="0 0 28 28"><rect x="0" y="0" width="28" height="28" rx="4" fill="#36b37e"/><path d="M7.5 5.8h13.2v14.8l-6.6-6.3-6.6 6.3z" fill="#fff"/></svg></div>
<div class="t" style="left:189.7px;top:563.68px;font-size:22px;line-height:22px;color:#0a48bb;font-weight:400;font-style:normal;letter-spacing:0.564px;">SCRUM-10</div>
<div class="t" style="left:388.5px;top:563.68px;font-size:22px;line-height:22px;color:#333;font-weight:400;font-style:normal;letter-spacing:0.6000000000000001px;">As a developer, I can</div>
<div class="a" style="left:1070.5px;top:561.10px;height:27.2px;padding:0 6.5px 0 7.3px;border-radius:4px;background:#deebff;font-size:18.5px;line-height:27.6px;font-weight:700;color:#0a46bb;letter-spacing:0.5px;white-space:nowrap">IN PROGRESS</div>
<div class="a" style="left:1281.0px;top:561.60px;width:32px;height:29px"><svg width="32" height="29" viewBox="0 0 32 29"><path d="M16 2.2C8.4 2.2 2.2 7.2 2.2 13.4S8.4 24.6 16 24.6c2 0 3.9-.3 5.6-.9l5.3 3.6-.9-5.3c2.9-2 4.6-5 4.6-8.6C30.6 7.2 23.6 2.2 16 2.2z" fill="none" stroke="#42526e" stroke-width="3.6" stroke-linejoin="round"/><rect x="9" y="9.6" width="14.5" height="3.2" rx="1.6" fill="#42526e"/><rect x="9" y="14.6" width="7.5" height="3.2" rx="1.6" fill="#42526e"/></svg></div>
<div class="t" style="left:1333.3px;top:566.48px;font-size:22px;line-height:22px;color:#7a869a;font-weight:400;font-style:italic;letter-spacing:0.76px;">1 comment</div>
<div class="a" style="left:1539.5px;top:558.50px;width:32px;height:32px"><svg width="32" height="32" viewBox="0 0 32 32"><circle cx="16" cy="16" r="15.5" fill="#6554c0"/><circle cx="6.3" cy="14.8" r="1.9" fill="#fde3da"/><circle cx="25.7" cy="14.8" r="1.9" fill="#fde3da"/><ellipse cx="16" cy="16.5" rx="8.7" ry="10.6" fill="#fde3da"/><path d="M11.4 20.3c1.5-.5 3-.6 4.6-.6s3.1.1 4.6.6v3.5c-.8 2.2-2.5 3.3-4.6 3.3s-3.8-1.1-4.6-3.3z" fill="#e0a988"/><ellipse cx="16" cy="22.6" rx="2" ry="1.2" fill="#2b3a4a"/><circle cx="12.6" cy="15.1" r="1.15" fill="#2b3a4a"/><circle cx="19.2" cy="15.1" r="1.15" fill="#2b3a4a"/><path d="M10.6 12h3.2M18 12h3.2" stroke="#e3b39a" stroke-width="1.1" stroke-linecap="round"/></svg></div>
<div class="t" style="left:1585.3px;top:563.48px;font-size:22px;line-height:22px;color:#2b2b2b;font-weight:400;font-style:normal;letter-spacing:0.2px;">Raziman</div>
<div class="t" style="left:0;width:87.5px;text-align:center;top:616.08px;font-size:24px;line-height:24px;font-weight:700;color:#172b4d;padding-left:0px;letter-spacing:0.3px">20</div>
<div class="a" style="left:112.9px;top:614.60px;width:28px;height:28px"><svg width="28" height="28" viewBox="0 0 28 28"><rect x="0" y="0" width="28" height="28" rx="4" fill="#36b37e"/><path d="M7.5 5.8h13.2v14.8l-6.6-6.3-6.6 6.3z" fill="#fff"/></svg></div>
<div class="t" style="left:189.7px;top:617.58px;font-size:22px;line-height:22px;color:#0a48bb;font-weight:400;font-style:normal;letter-spacing:1.064px;">SCRUM-20</div>
<div class="t" style="left:388.5px;top:617.58px;font-size:22px;line-height:22px;color:#333;font-weight:400;font-style:normal;letter-spacing:0.525px;">As a user, I&#39;d like a</div>
<div class="a" style="left:1070.5px;top:615.00px;height:27.2px;padding:0 6.5px 0 7.3px;border-radius:4px;background:#e3fcef;font-size:18.5px;line-height:27.6px;font-weight:700;color:#006644;letter-spacing:0.5px;white-space:nowrap">DONE</div>
<div class="a" style="left:1281.0px;top:615.50px;width:32px;height:29px"><svg width="32" height="29" viewBox="0 0 32 29"><path d="M16 2.2C8.4 2.2 2.2 7.2 2.2 13.4S8.4 24.6 16 24.6c2 0 3.9-.3 5.6-.9l5.3 3.6-.9-5.3c2.9-2 4.6-5 4.6-8.6C30.6 7.2 23.6 2.2 16 2.2z" fill="none" stroke="#42526e" stroke-width="3.6" stroke-linejoin="round"/><rect x="9" y="9.6" width="14.5" height="3.2" rx="1.6" fill="#42526e"/><rect x="9" y="14.6" width="7.5" height="3.2" rx="1.6" fill="#42526e"/></svg></div>
<div class="t" style="left:1333.3px;top:620.38px;font-size:22px;line-height:22px;color:#7a869a;font-weight:400;font-style:italic;letter-spacing:0.76px;">1 comment</div>
<div class="a" style="left:1539.5px;top:612.40px;width:32px;height:32px"><svg width="32" height="32" viewBox="0 0 32 32"><circle cx="16" cy="16" r="15.5" fill="#6554c0"/><circle cx="6.3" cy="14.8" r="1.9" fill="#fde3da"/><circle cx="25.7" cy="14.8" r="1.9" fill="#fde3da"/><ellipse cx="16" cy="16.5" rx="8.7" ry="10.6" fill="#fde3da"/><path d="M11.4 20.3c1.5-.5 3-.6 4.6-.6s3.1.1 4.6.6v3.5c-.8 2.2-2.5 3.3-4.6 3.3s-3.8-1.1-4.6-3.3z" fill="#e0a988"/><ellipse cx="16" cy="22.6" rx="2" ry="1.2" fill="#2b3a4a"/><circle cx="12.6" cy="15.1" r="1.15" fill="#2b3a4a"/><circle cx="19.2" cy="15.1" r="1.15" fill="#2b3a4a"/><path d="M10.6 12h3.2M18 12h3.2" stroke="#e3b39a" stroke-width="1.1" stroke-linecap="round"/></svg></div>
<div class="t" style="left:1585.3px;top:617.38px;font-size:22px;line-height:22px;color:#2b2b2b;font-weight:400;font-style:normal;letter-spacing:0.2px;">Raziman</div>
<div class="t" style="left:0;width:87.5px;text-align:center;top:669.98px;font-size:24px;line-height:24px;font-weight:700;color:#172b4d;padding-left:0px;letter-spacing:0.3px">21</div>
<div class="a" style="left:112.9px;top:668.50px;width:28px;height:28px"><svg width="28" height="28" viewBox="0 0 28 28"><rect x="0" y="0" width="28" height="28" rx="4" fill="#36b37e"/><path d="M7.5 5.8h13.2v14.8l-6.6-6.3-6.6 6.3z" fill="#fff"/></svg></div>
<div class="t" style="left:189.7px;top:671.48px;font-size:22px;line-height:22px;color:#0a48bb;font-weight:400;font-style:normal;letter-spacing:0.564px;">SCRUM-21</div>
<div class="t" style="left:388.5px;top:671.48px;font-size:22px;line-height:22px;color:#333;font-weight:400;font-style:normal;letter-spacing:0.525px;">As a user, I&#39;d like a</div>
<div class="a" style="left:1070.5px;top:668.90px;height:27.2px;padding:0 6.5px 0 7.3px;border-radius:4px;background:#e3fcef;font-size:18.5px;line-height:27.6px;font-weight:700;color:#006644;letter-spacing:0.5px;white-space:nowrap">DONE</div>
<div class="a" style="left:1281.0px;top:669.40px;width:32px;height:29px"><svg width="32" height="29" viewBox="0 0 32 29"><path d="M16 2.2C8.4 2.2 2.2 7.2 2.2 13.4S8.4 24.6 16 24.6c2 0 3.9-.3 5.6-.9l5.3 3.6-.9-5.3c2.9-2 4.6-5 4.6-8.6C30.6 7.2 23.6 2.2 16 2.2z" fill="none" stroke="#42526e" stroke-width="3.6" stroke-linejoin="round"/><rect x="9" y="9.6" width="14.5" height="3.2" rx="1.6" fill="#42526e"/><rect x="9" y="14.6" width="7.5" height="3.2" rx="1.6" fill="#42526e"/></svg></div>
<div class="t" style="left:1333.3px;top:674.28px;font-size:22px;line-height:22px;color:#7a869a;font-weight:400;font-style:italic;letter-spacing:0.76px;">1 comment</div>
<div class="a" style="left:1539.5px;top:666.30px;width:32px;height:32px"><svg width="32" height="32" viewBox="0 0 32 32"><circle cx="16" cy="16" r="15.5" fill="#6554c0"/><circle cx="6.3" cy="14.8" r="1.9" fill="#fde3da"/><circle cx="25.7" cy="14.8" r="1.9" fill="#fde3da"/><ellipse cx="16" cy="16.5" rx="8.7" ry="10.6" fill="#fde3da"/><path d="M11.4 20.3c1.5-.5 3-.6 4.6-.6s3.1.1 4.6.6v3.5c-.8 2.2-2.5 3.3-4.6 3.3s-3.8-1.1-4.6-3.3z" fill="#e0a988"/><ellipse cx="16" cy="22.6" rx="2" ry="1.2" fill="#2b3a4a"/><circle cx="12.6" cy="15.1" r="1.15" fill="#2b3a4a"/><circle cx="19.2" cy="15.1" r="1.15" fill="#2b3a4a"/><path d="M10.6 12h3.2M18 12h3.2" stroke="#e3b39a" stroke-width="1.1" stroke-linecap="round"/></svg></div>
<div class="t" style="left:1585.3px;top:671.28px;font-size:22px;line-height:22px;color:#2b2b2b;font-weight:400;font-style:normal;letter-spacing:0.2px;">Raziman</div>
<div class="t" style="left:0;width:87.5px;text-align:center;top:723.88px;font-size:24px;line-height:24px;font-weight:700;color:#172b4d;padding-left:0px;letter-spacing:0.3px">22</div>
<div class="a" style="left:112.9px;top:722.40px;width:28px;height:28px"><svg width="28" height="28" viewBox="0 0 28 28"><rect x="0" y="0" width="28" height="28" rx="4" fill="#36b37e"/><path d="M7.5 5.8h13.2v14.8l-6.6-6.3-6.6 6.3z" fill="#fff"/></svg></div>
<div class="t" style="left:189.7px;top:725.38px;font-size:22px;line-height:22px;color:#0a48bb;font-weight:400;font-style:normal;letter-spacing:0.921px;">SCRUM-22</div>
<div class="t" style="left:388.5px;top:725.38px;font-size:22px;line-height:22px;color:#333;font-weight:400;font-style:normal;letter-spacing:0.525px;">As a user, I&#39;d like a</div>
<div class="a" style="left:1070.5px;top:722.80px;height:27.2px;padding:0 6.5px 0 7.3px;border-radius:4px;background:#e3fcef;font-size:18.5px;line-height:27.6px;font-weight:700;color:#006644;letter-spacing:0.5px;white-space:nowrap">DONE</div>
<div class="a" style="left:1281.0px;top:723.30px;width:32px;height:29px"><svg width="32" height="29" viewBox="0 0 32 29"><path d="M16 2.2C8.4 2.2 2.2 7.2 2.2 13.4S8.4 24.6 16 24.6c2 0 3.9-.3 5.6-.9l5.3 3.6-.9-5.3c2.9-2 4.6-5 4.6-8.6C30.6 7.2 23.6 2.2 16 2.2z" fill="none" stroke="#42526e" stroke-width="3.6" stroke-linejoin="round"/><rect x="9" y="9.6" width="14.5" height="3.2" rx="1.6" fill="#42526e"/><rect x="9" y="14.6" width="7.5" height="3.2" rx="1.6" fill="#42526e"/></svg></div>
<div class="t" style="left:1333.3px;top:728.18px;font-size:22px;line-height:22px;color:#7a869a;font-weight:400;font-style:italic;letter-spacing:0.76px;">1 comment</div>
<div class="a" style="left:1539.5px;top:720.20px;width:32px;height:32px"><svg width="32" height="32" viewBox="0 0 32 32"><circle cx="16" cy="16" r="15.5" fill="#6554c0"/><circle cx="6.3" cy="14.8" r="1.9" fill="#fde3da"/><circle cx="25.7" cy="14.8" r="1.9" fill="#fde3da"/><ellipse cx="16" cy="16.5" rx="8.7" ry="10.6" fill="#fde3da"/><path d="M11.4 20.3c1.5-.5 3-.6 4.6-.6s3.1.1 4.6.6v3.5c-.8 2.2-2.5 3.3-4.6 3.3s-3.8-1.1-4.6-3.3z" fill="#e0a988"/><ellipse cx="16" cy="22.6" rx="2" ry="1.2" fill="#2b3a4a"/><circle cx="12.6" cy="15.1" r="1.15" fill="#2b3a4a"/><circle cx="19.2" cy="15.1" r="1.15" fill="#2b3a4a"/><path d="M10.6 12h3.2M18 12h3.2" stroke="#e3b39a" stroke-width="1.1" stroke-linecap="round"/></svg></div>
<div class="t" style="left:1585.3px;top:725.18px;font-size:22px;line-height:22px;color:#2b2b2b;font-weight:400;font-style:normal;letter-spacing:0.2px;">Raziman</div>
<div class="t" style="left:0;width:87.5px;text-align:center;top:777.78px;font-size:24px;line-height:24px;font-weight:700;color:#172b4d;padding-left:0px;letter-spacing:0.3px">23</div>
<div class="a" style="left:112.9px;top:776.30px;width:28px;height:28px"><svg width="28" height="28" viewBox="0 0 28 28"><rect x="0" y="0" width="28" height="28" rx="4" fill="#36b37e"/><path d="M7.5 5.8h13.2v14.8l-6.6-6.3-6.6 6.3z" fill="#fff"/></svg></div>
<div class="t" style="left:189.7px;top:779.28px;font-size:22px;line-height:22px;color:#0a48bb;font-weight:400;font-style:normal;letter-spacing:1.064px;">SCRUM-23</div>
<div class="t" style="left:388.5px;top:779.28px;font-size:22px;line-height:22px;color:#333;font-weight:400;font-style:normal;letter-spacing:0.525px;">As a user, I&#39;d like a</div>
<div class="a" style="left:1070.5px;top:776.70px;height:27.2px;padding:0 6.5px 0 7.3px;border-radius:4px;background:#e3fcef;font-size:18.5px;line-height:27.6px;font-weight:700;color:#006644;letter-spacing:0.5px;white-space:nowrap">DONE</div>
<div class="a" style="left:1281.0px;top:777.20px;width:32px;height:29px"><svg width="32" height="29" viewBox="0 0 32 29"><path d="M16 2.2C8.4 2.2 2.2 7.2 2.2 13.4S8.4 24.6 16 24.6c2 0 3.9-.3 5.6-.9l5.3 3.6-.9-5.3c2.9-2 4.6-5 4.6-8.6C30.6 7.2 23.6 2.2 16 2.2z" fill="none" stroke="#42526e" stroke-width="3.6" stroke-linejoin="round"/><rect x="9" y="9.6" width="14.5" height="3.2" rx="1.6" fill="#42526e"/><rect x="9" y="14.6" width="7.5" height="3.2" rx="1.6" fill="#42526e"/></svg></div>
<div class="t" style="left:1333.3px;top:782.08px;font-size:22px;line-height:22px;color:#7a869a;font-weight:400;font-style:italic;letter-spacing:0.76px;">1 comment</div>
<div class="a" style="left:1539.5px;top:774.10px;width:32px;height:32px"><svg width="32" height="32" viewBox="0 0 32 32"><circle cx="16" cy="16" r="15.5" fill="#6554c0"/><circle cx="6.3" cy="14.8" r="1.9" fill="#fde3da"/><circle cx="25.7" cy="14.8" r="1.9" fill="#fde3da"/><ellipse cx="16" cy="16.5" rx="8.7" ry="10.6" fill="#fde3da"/><path d="M11.4 20.3c1.5-.5 3-.6 4.6-.6s3.1.1 4.6.6v3.5c-.8 2.2-2.5 3.3-4.6 3.3s-3.8-1.1-4.6-3.3z" fill="#e0a988"/><ellipse cx="16" cy="22.6" rx="2" ry="1.2" fill="#2b3a4a"/><circle cx="12.6" cy="15.1" r="1.15" fill="#2b3a4a"/><circle cx="19.2" cy="15.1" r="1.15" fill="#2b3a4a"/><path d="M10.6 12h3.2M18 12h3.2" stroke="#e3b39a" stroke-width="1.1" stroke-linecap="round"/></svg></div>
<div class="t" style="left:1585.3px;top:779.08px;font-size:22px;line-height:22px;color:#2b2b2b;font-weight:400;font-style:normal;letter-spacing:0.2px;">Raziman</div>
<div class="t" style="left:0;width:87.5px;text-align:center;top:831.68px;font-size:24px;line-height:24px;font-weight:700;color:#172b4d;padding-left:0px;letter-spacing:0.3px">24</div>
<div class="a" style="left:112.9px;top:830.20px;width:28px;height:28px"><svg width="28" height="28" viewBox="0 0 28 28"><rect x="0" y="0" width="28" height="28" rx="4" fill="#36b37e"/><path d="M7.5 5.8h13.2v14.8l-6.6-6.3-6.6 6.3z" fill="#fff"/></svg></div>
<div class="t" style="left:189.7px;top:833.18px;font-size:22px;line-height:22px;color:#0a48bb;font-weight:400;font-style:normal;letter-spacing:0.564px;">SCRUM-18</div>
<div class="t" style="left:388.5px;top:833.18px;font-size:22px;line-height:22px;color:#333;font-weight:400;font-style:normal;letter-spacing:0.525px;">As a user, I&#39;d like a</div>
<div class="a" style="left:1070.5px;top:830.60px;height:27.2px;padding:0 6.5px 0 7.3px;border-radius:4px;background:#e3fcef;font-size:18.5px;line-height:27.6px;font-weight:700;color:#006644;letter-spacing:0.5px;white-space:nowrap">DONE</div>
<div class="a" style="left:1281.0px;top:831.10px;width:32px;height:29px"><svg width="32" height="29" viewBox="0 0 32 29"><path d="M16 2.2C8.4 2.2 2.2 7.2 2.2 13.4S8.4 24.6 16 24.6c2 0 3.9-.3 5.6-.9l5.3 3.6-.9-5.3c2.9-2 4.6-5 4.6-8.6C30.6 7.2 23.6 2.2 16 2.2z" fill="none" stroke="#42526e" stroke-width="3.6" stroke-linejoin="round"/><rect x="9" y="9.6" width="14.5" height="3.2" rx="1.6" fill="#42526e"/><rect x="9" y="14.6" width="7.5" height="3.2" rx="1.6" fill="#42526e"/></svg></div>
<div class="t" style="left:1333.3px;top:835.98px;font-size:22px;line-height:22px;color:#7a869a;font-weight:400;font-style:italic;letter-spacing:0.76px;">1 comment</div>
<div class="a" style="left:1539.5px;top:828.00px;width:32px;height:32px"><svg width="32" height="32" viewBox="0 0 32 32"><circle cx="16" cy="16" r="15.5" fill="#6554c0"/><circle cx="6.3" cy="14.8" r="1.9" fill="#fde3da"/><circle cx="25.7" cy="14.8" r="1.9" fill="#fde3da"/><ellipse cx="16" cy="16.5" rx="8.7" ry="10.6" fill="#fde3da"/><path d="M11.4 20.3c1.5-.5 3-.6 4.6-.6s3.1.1 4.6.6v3.5c-.8 2.2-2.5 3.3-4.6 3.3s-3.8-1.1-4.6-3.3z" fill="#e0a988"/><ellipse cx="16" cy="22.6" rx="2" ry="1.2" fill="#2b3a4a"/><circle cx="12.6" cy="15.1" r="1.15" fill="#2b3a4a"/><circle cx="19.2" cy="15.1" r="1.15" fill="#2b3a4a"/><path d="M10.6 12h3.2M18 12h3.2" stroke="#e3b39a" stroke-width="1.1" stroke-linecap="round"/></svg></div>
<div class="t" style="left:1585.3px;top:832.98px;font-size:22px;line-height:22px;color:#2b2b2b;font-weight:400;font-style:normal;letter-spacing:0.2px;">Raziman</div>
<div class="t" style="left:0;width:87.5px;text-align:center;top:885.58px;font-size:24px;line-height:24px;font-weight:700;color:#172b4d;padding-left:0px;letter-spacing:0.3px">25</div>
<div class="a" style="left:112.9px;top:884.10px;width:28px;height:28px"><svg width="28" height="28" viewBox="0 0 28 28"><rect x="0" y="0" width="28" height="28" rx="4" fill="#36b37e"/><path d="M7.5 5.8h13.2v14.8l-6.6-6.3-6.6 6.3z" fill="#fff"/></svg></div>
<div class="t" style="left:189.7px;top:887.08px;font-size:22px;line-height:22px;color:#0a48bb;font-weight:400;font-style:normal;letter-spacing:0.564px;">SCRUM-19</div>
<div class="t" style="left:388.5px;top:887.08px;font-size:22px;line-height:22px;color:#333;font-weight:400;font-style:normal;letter-spacing:0.525px;">As a user, I&#39;d like a</div>
<div class="a" style="left:1070.5px;top:884.50px;height:27.2px;padding:0 6.5px 0 7.3px;border-radius:4px;background:#e3fcef;font-size:18.5px;line-height:27.6px;font-weight:700;color:#006644;letter-spacing:0.5px;white-space:nowrap">DONE</div>
<div class="a" style="left:1281.0px;top:885.00px;width:32px;height:29px"><svg width="32" height="29" viewBox="0 0 32 29"><path d="M16 2.2C8.4 2.2 2.2 7.2 2.2 13.4S8.4 24.6 16 24.6c2 0 3.9-.3 5.6-.9l5.3 3.6-.9-5.3c2.9-2 4.6-5 4.6-8.6C30.6 7.2 23.6 2.2 16 2.2z" fill="none" stroke="#42526e" stroke-width="3.6" stroke-linejoin="round"/><rect x="9" y="9.6" width="14.5" height="3.2" rx="1.6" fill="#42526e"/><rect x="9" y="14.6" width="7.5" height="3.2" rx="1.6" fill="#42526e"/></svg></div>
<div class="t" style="left:1333.3px;top:889.88px;font-size:22px;line-height:22px;color:#7a869a;font-weight:400;font-style:italic;letter-spacing:0.76px;">1 comment</div>
<div class="a" style="left:1539.5px;top:881.90px;width:32px;height:32px"><svg width="32" height="32" viewBox="0 0 32 32"><circle cx="16" cy="16" r="15.5" fill="#6554c0"/><circle cx="6.3" cy="14.8" r="1.9" fill="#fde3da"/><circle cx="25.7" cy="14.8" r="1.9" fill="#fde3da"/><ellipse cx="16" cy="16.5" rx="8.7" ry="10.6" fill="#fde3da"/><path d="M11.4 20.3c1.5-.5 3-.6 4.6-.6s3.1.1 4.6.6v3.5c-.8 2.2-2.5 3.3-4.6 3.3s-3.8-1.1-4.6-3.3z" fill="#e0a988"/><ellipse cx="16" cy="22.6" rx="2" ry="1.2" fill="#2b3a4a"/><circle cx="12.6" cy="15.1" r="1.15" fill="#2b3a4a"/><circle cx="19.2" cy="15.1" r="1.15" fill="#2b3a4a"/><path d="M10.6 12h3.2M18 12h3.2" stroke="#e3b39a" stroke-width="1.1" stroke-linecap="round"/></svg></div>
<div class="t" style="left:1585.3px;top:886.88px;font-size:22px;line-height:22px;color:#2b2b2b;font-weight:400;font-style:normal;letter-spacing:0.2px;">Raziman</div>
<div class="a" style="left:0;top:0;width:1856px;height:72.80000000000001px;background:#f7f8f9"></div>
<div class="a" style="left:0;top:0;width:1856px;height:2px;background:#cdcfd0"></div>
<div class="a" style="left:0;top:71.80000000000001px;width:1856px;height:2px;background:#dcdcdc"></div>
<div class="a" style="left:0;top:73.80000000000001px;width:1856px;height:12px;background:linear-gradient(180deg,rgba(0,0,0,.035),rgba(0,0,0,0))"></div>
<div class="a" style="left:86.50px;top:0;width:2px;height:72.80000000000001px;background:#d8d8d8"></div>
<div class="a" style="left:164.75px;top:0;width:1.5px;height:72.80000000000001px;background:#e3e3e3"></div>
<div class="a" style="left:353.75px;top:0;width:1.5px;height:72.80000000000001px;background:#e3e3e3"></div>
<div class="a" style="left:706.75px;top:0;width:1.5px;height:72.80000000000001px;background:#e3e3e3"></div>
<div class="a" style="left:1044.75px;top:0;width:1.5px;height:72.80000000000001px;background:#e3e3e3"></div>
<div class="a" style="left:1251.75px;top:0;width:1.5px;height:72.80000000000001px;background:#e3e3e3"></div>
<div class="a" style="left:1513.75px;top:0;width:1.5px;height:72.80000000000001px;background:#e3e3e3"></div>
<div class="a" style="left:1729.75px;top:0;width:1.5px;height:72.80000000000001px;background:#e3e3e3"></div>
<div class="a" style="left:708.5px;top:0;width:28px;height:72.80000000000001px;background:linear-gradient(90deg,rgba(0,0,0,.06),rgba(0,0,0,.02) 40%,rgba(0,0,0,0))"></div>
<div class="t" style="left:87.5px;width:78px;text-align:center;top:26.68px;font-size:22px;line-height:22px;font-weight:700;color:#172b4d;letter-spacing:0.45px;text-indent:0.00px">T</div>
<svg style="position:absolute;left:138.2px;top:49.10000000000002px" width="15.5" height="11.2" viewBox="-2 -2 15.5 11.2"><path d="M1 1L5.75 6.2L10.5 1" fill="none" stroke="#000" stroke-width="2.9" stroke-linecap="round" stroke-linejoin="round"/></svg><div class="t" style="left:165.5px;width:189px;text-align:center;top:26.68px;font-size:22px;line-height:22px;font-weight:700;color:#172b4d;letter-spacing:0.05px;text-indent:-0.40px">Key</div>
<svg style="position:absolute;left:327.2px;top:49.10000000000002px" width="15.5" height="11.2" viewBox="-2 -2 15.5 11.2"><path d="M1 1L5.75 6.2L10.5 1" fill="none" stroke="#000" stroke-width="2.9" stroke-linecap="round" stroke-linejoin="round"/></svg><div class="t" style="left:354.5px;width:353px;text-align:center;top:26.68px;font-size:22px;line-height:22px;font-weight:700;color:#172b4d;letter-spacing:0.85px;text-indent:0.40px">Summary</div>
<svg style="position:absolute;left:680.2px;top:49.10000000000002px" width="15.5" height="11.2" viewBox="-2 -2 15.5 11.2"><path d="M1 1L5.75 6.2L10.5 1" fill="none" stroke="#000" stroke-width="2.9" stroke-linecap="round" stroke-linejoin="round"/></svg><div class="t" style="left:707.5px;width:338px;text-align:center;top:26.68px;font-size:22px;line-height:22px;font-weight:700;color:#172b4d;letter-spacing:0.85px;text-indent:0.40px">Description</div>
<svg style="position:absolute;left:1018.2px;top:49.10000000000002px" width="15.5" height="11.2" viewBox="-2 -2 15.5 11.2"><path d="M1 1L5.75 6.2L10.5 1" fill="none" stroke="#000" stroke-width="2.9" stroke-linecap="round" stroke-linejoin="round"/></svg><div class="t" style="left:1045.5px;width:207px;text-align:center;top:26.68px;font-size:22px;line-height:22px;font-weight:700;color:#172b4d;letter-spacing:0.71px;text-indent:0.26px">Status</div>
<svg style="position:absolute;left:1225.2px;top:49.10000000000002px" width="15.5" height="11.2" viewBox="-2 -2 15.5 11.2"><path d="M1 1L5.75 6.2L10.5 1" fill="none" stroke="#000" stroke-width="2.9" stroke-linecap="round" stroke-linejoin="round"/></svg><div class="t" style="left:1252.5px;width:262px;text-align:center;top:26.68px;font-size:22px;line-height:22px;font-weight:700;color:#172b4d;letter-spacing:0.95px;text-indent:0.50px">Comments</div>
<svg style="position:absolute;left:1487.2px;top:49.10000000000002px" width="15.5" height="11.2" viewBox="-2 -2 15.5 11.2"><path d="M1 1L5.75 6.2L10.5 1" fill="none" stroke="#000" stroke-width="2.9" stroke-linecap="round" stroke-linejoin="round"/></svg><div class="t" style="left:1514.5px;width:216px;text-align:center;top:26.68px;font-size:22px;line-height:22px;font-weight:700;color:#172b4d;letter-spacing:0.45px;text-indent:0.00px">Assignee</div>
<svg style="position:absolute;left:1703.2px;top:49.10000000000002px" width="15.5" height="11.2" viewBox="-2 -2 15.5 11.2"><path d="M1 1L5.75 6.2L10.5 1" fill="none" stroke="#000" stroke-width="2.9" stroke-linecap="round" stroke-linejoin="round"/></svg><div class="t" style="left:1726.5px;width:190px;text-align:center;top:26.68px;font-size:22px;line-height:22px;font-weight:700;color:#172b4d;letter-spacing:0.95px;text-indent:0.50px">Due Date</div>
</div>
<div class="a" style="left:1880.5px;top:193.2px;width:1.5px;height:897.8px;background:#dedede"></div>
<div class="a" style="left:23px;top:193.2px;width:1.5px;height:897.8px;background:#d8d8d8"></div>
<div class="a" style="left:23px;top:1090px;width:1859px;height:1px;background:#e2e2e2"></div>
<div class="a" style="left:0;top:1092px;width:1917px;height:38px;background:linear-gradient(180deg,#fff 0%,#f8f8f8 50%,#ededed 100%)"></div>
<div class="a" style="left:1559px;top:1000.6px;width:253px;height:69.6px;border-radius:35px;background:#038003;box-shadow:0 4px 12px rgba(0,0,0,.18)"></div>
<svg class="a" style="left:1599px;top:1021px" width="31" height="29" viewBox="0 0 31 29"><path d="M13.5 1.5v8" stroke="#fff" stroke-width="2"/><path d="M13.5 1.5l6 3-6 2.5z" fill="#fff"/><path d="M13.5 9.5L1.8 24.5c-.8 1.2-.4 3 1.5 3h24.4c1.9 0 2.3-1.8 1.5-3L17.5 9.5z" fill="#fff"/><path d="M9.5 14.5l2.5 2 1.5-2.5 2 2.5 2.5-2.2" fill="none" stroke="#038003" stroke-width="1.4"/></svg>
<div class="t" style="left:1639.8px;top:1021.92px;font-size:27.5px;line-height:27.5px;color:#fff;font-weight:700;font-style:normal;letter-spacing:-0.5px;">Quick tour</div>
<svg class="a" style="left:990px;top:95px" width="20" height="26" viewBox="0 0 20 26"><path d="M4 4v15.5l3.6-3.5 3.1 7.2 2.9-1.2-3-7h5.3z" fill="#000" stroke="#fff" stroke-width="1.3" stroke-linejoin="round"/></svg>
</body></html>
